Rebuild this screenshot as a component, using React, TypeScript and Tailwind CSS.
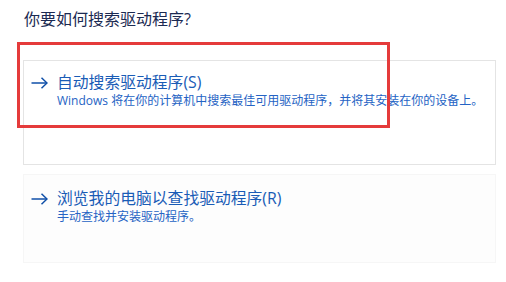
import React from "react";

function Arrow() {
  return (
    <svg width="17" height="12" viewBox="0 0 17 12" fill="none" className="shrink-0">
      <path d="M0.5 6H16" stroke="#0f4fa8" strokeWidth="1.5" />
      <path d="M10.5 0.8L16 6L10.5 11.2" stroke="#0f4fa8" strokeWidth="1.5" strokeLinejoin="miter" />
    </svg>
  );
}

interface OptionProps {
  title: string;
  desc: string;
  className?: string;
}

function Option({ title, desc, className }: OptionProps) {
  return (
    <div className={className}>
      <div className="flex items-center gap-[9px]">
        <Arrow />
        <span className="text-[15.8px] leading-[19px] text-[#1a5cb6]">{title}</span>
      </div>
      <p className="pl-[26px] text-[12px] leading-[17px] text-[#2563c4]">{desc}</p>
    </div>
  );
}

export default function App() {
  return (
    <div
      className="relative w-[506px] h-[282px] overflow-hidden bg-white"
      style={{ fontFamily: '"Open Sans", "Noto Sans CJK SC", sans-serif' }}
    >
      <h1 className="pl-6 pt-2 text-[16px] leading-[22px] text-[#1b2a52]">你要如何搜索驱动程序?</h1>

      <div className="ml-[23px] mt-[30px] flex w-[473px] flex-col gap-[9px]">
        <Option
          className="h-[105px] border border-[#e4e4e4] bg-white pl-[7px] pt-[12px]"
          title="自动搜索驱动程序(S)"
          desc="Windows 将在你的计算机中搜索最佳可用驱动程序，并将其安装在你的设备上。"
        />
        <Option
          className="h-[89px] border border-[#f6f6f6] bg-[#fdfdfd] pl-[7px] pt-[14px]"
          title="浏览我的电脑以查找驱动程序(R)"
          desc="手动查找并安装驱动程序。"
        />
      </div>

      {/* annotation box drawn over the first option */}
      <div className="absolute left-[17px] top-[42px] h-[86px] w-[373px] border-[3px] border-[#e53b3b]" />
    </div>
  );
}
